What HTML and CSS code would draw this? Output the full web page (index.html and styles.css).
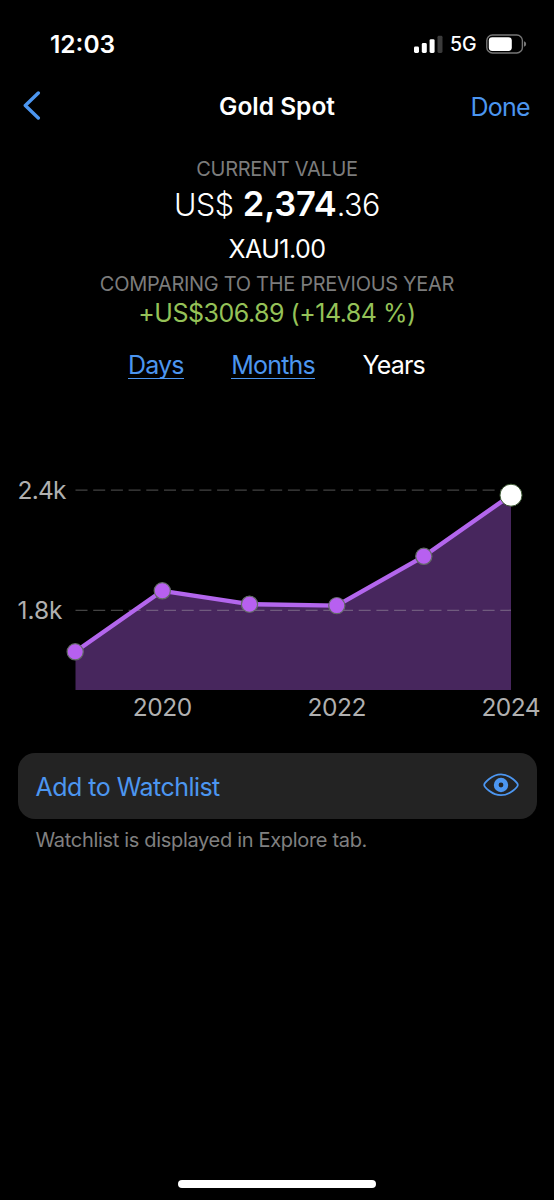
FILE: index.html
```html
<!DOCTYPE html>
<html lang="en">
<head>
<meta charset="utf-8">
<title>Gold Spot</title>
<link rel="stylesheet" href="styles.css">
</head>
<body>
<div class="screen">
  <header class="status">
    <span class="time">12:03</span>
    <div class="indicators">
      <svg class="signal" width="29" height="19" viewBox="0 0 29 19">
        <g fill="#fff"><rect x="0" y="11.5" width="5" height="6.5" rx="1.4"/><rect x="7.8" y="8" width="5" height="10" rx="1.4"/><rect x="15.6" y="4.2" width="5" height="13.8" rx="1.4"/></g>
        <rect x="23.5" y="0.8" width="5" height="17.2" rx="1.4" fill="#3b3b3b"/>
      </svg>
      <span class="network">5G</span>
      <svg class="battery" width="41" height="20" viewBox="0 0 41 20">
        <rect x="0.8" y="1" width="35.6" height="18" rx="5.6" fill="none" stroke="#777" stroke-width="1.4"/>
        <rect x="2.8" y="3.2" width="23" height="13.8" rx="3.4" fill="#fff"/>
        <path d="M38 7.2 Q40.2 8 40.2 10 Q40.2 12 38 12.8 Z" fill="#777"/>
      </svg>
    </div>
  </header>
  <nav class="nav">
    <svg class="back" width="20" height="30" viewBox="0 0 20 30"><path d="M17.3 3 L4.3 15.5 L17.3 28" fill="none" stroke="#4c96f0" stroke-width="3.4" stroke-linecap="round" stroke-linejoin="round"/></svg>
    <h1 class="title">Gold Spot</h1>
    <a class="done">Done</a>
  </nav>
  <section class="summary">
    <div class="label current">CURRENT VALUE</div>
    <div class="value"><span class="currency">US$</span> <b class="whole">2,374</b><span class="cents">.36</span></div>
    <div class="pair">XAU1.00</div>
    <div class="label compare">COMPARING TO THE PREVIOUS YEAR</div>
    <div class="change">+US$306.89 (+14.84 %)</div>
  </section>
  <div class="tabs">
    <a class="tab days">Days</a>
    <a class="tab months">Months</a>
    <span class="tab selected">Years</span>
  </div>
  <svg class="chart" width="554" height="270" viewBox="0 460 554 270">
    <path d="M75.5 651.8 L162.3 590.8 L249.5 604.2 L336.8 605.6 L423.8 556.3 L511 495 V690 H75.5 Z" fill="#47265d"/>
    <g class="grid"><path d="M75.5 490.2 H511"/><path d="M75.5 610.3 H511"/></g>
    <path d="M75.2 651.8 L162.3 590.8 L249.5 604.2 L336.8 605.6 L423.8 556.3 L511 495" fill="none" stroke="#b366ed" stroke-width="4.4" stroke-linejoin="round"/>
    <g class="points">
      <circle cx="75.2" cy="651.8" r="8.1"/><circle cx="162.3" cy="590.8" r="8.1"/><circle cx="249.5" cy="604.2" r="8.1"/><circle cx="336.8" cy="605.6" r="8.1"/><circle cx="423.8" cy="556.3" r="8.1"/>
    </g>
    <circle cx="511" cy="495.2" r="11" fill="#fff" stroke="#405c37"/>
    <g class="axis">
      <text x="17.5" y="499" textLength="49">2.4k</text>
      <text x="17.5" y="619" textLength="45">1.8k</text>
      <text x="132.8" y="715.5" textLength="59.5">2020</text>
      <text x="307.5" y="715.5" textLength="59">2022</text>
      <text x="481.5" y="715.5" textLength="59">2024</text>
    </g>
  </svg>
  <button class="watch">
    <span class="watch-text">Add to Watchlist</span>
    <svg class="eye" width="36" height="24" viewBox="0 0 36 24">
      <path d="M1.2 12 C1.2 10.3 8.7 1.4 18 1.4 S34.8 10.3 34.8 12 S27.3 22.2 18 22.2 S1.2 13.7 1.2 12 Z" fill="none" stroke="#4c96f0" stroke-width="1.8"/>
      <circle cx="18" cy="12" r="4.8" fill="none" stroke="#4c96f0" stroke-width="4.8"/>
    </svg>
  </button>
  <p class="note">Watchlist is displayed in Explore tab.</p>
  <div class="home"></div>
</div>
</body>
</html>
```
FILE: styles.css
```css
* { box-sizing: border-box; }
body { margin: 0; background: #000; color: #fff; font-family: Inter, "Liberation Sans", sans-serif; }
.screen { width: 554px; height: 1200px; display: flex; flex-direction: column; overflow: hidden; }
.status { height: 88px; flex: none; display: flex; align-items: center; justify-content: space-between; padding: 0 27px 0 50px; }
.time { font-size: 24.5px; font-weight: 600; }
.indicators { display: flex; align-items: center; }
.network { font-size: 19.5px; font-weight: 500; margin-left: 7px; margin-right: 8px; width: 28px; white-space: nowrap; }
.nav { height: 38px; flex: none; display: grid; grid-template-columns: 1fr auto 1fr; align-items: center; padding: 0 24px 0 22px; }
.title { margin: -2px 0 0 2px; font-size: 24.5px; font-weight: 600; line-height: 38px; }
.done { justify-self: end; font-size: 25px; letter-spacing: -.7px; color: #4c96f0; }
.back { margin: -5px 0 0 -1px; }
.summary { flex: none; display: flex; flex-direction: column; align-items: center; padding-top: 30px; white-space: nowrap; }
.label { color: #7c7c7c; font-size: 20px; line-height: 26px; letter-spacing: -.3px; }
.value { line-height: 44px; height: 44px; font-size: 34.5px; font-weight: 500; }
.currency, .cents { font-size: 30.5px; font-weight: 300; letter-spacing: -.5px; }
.whole { font-weight: 600; letter-spacing: -.1px; }
.pair { font-size: 25px; letter-spacing: -.5px; line-height: 45px; height: 45px; padding-top: 1px; }
.change { font-size: 25px; line-height: 32px; letter-spacing: -.5px; color: #95c258; }
.tabs { flex: none; height: 72px; display: flex; justify-content: space-between; align-items: center; padding: 0 129px 0 128px; font-size: 25px; letter-spacing: -.8px; }
.tab { line-height: 26px; border-bottom: 1.5px solid transparent; }
.days, .months { color: #4c96f0; border-color: #4c96f0; }
.chart { flex: none; display: block; margin-top: 59px; }
.grid { fill: none; stroke: #bbb; stroke-opacity: .36; stroke-width: 1.3; stroke-dasharray: 12 5.7; }
.points { fill: #b760f0; stroke: #646b68; stroke-width: 1.2; }
.axis { font-size: 24.5px; fill: #b0b0b0; }
.watch { flex: none; width: 519px; height: 66px; margin: 23px 0 0 17.5px; border: 0; border-radius: 17px; background: #232323; color: #4c96f0; padding: 0 18px; display: flex; align-items: center; justify-content: space-between; font: 400 25px Inter, "Liberation Sans", sans-serif; }
.watch-text { letter-spacing: -.53px; padding-top: 1px; }
.eye { margin-top: -2px; }
.note { margin: 8px 0 0 35.5px; font-size: 20px; line-height: 27px; letter-spacing: -.32px; color: #808080; white-space: nowrap; }
.home { width: 198px; height: 8px; border-radius: 4px; background: #fff; margin: auto auto 12px 178px; }
```
